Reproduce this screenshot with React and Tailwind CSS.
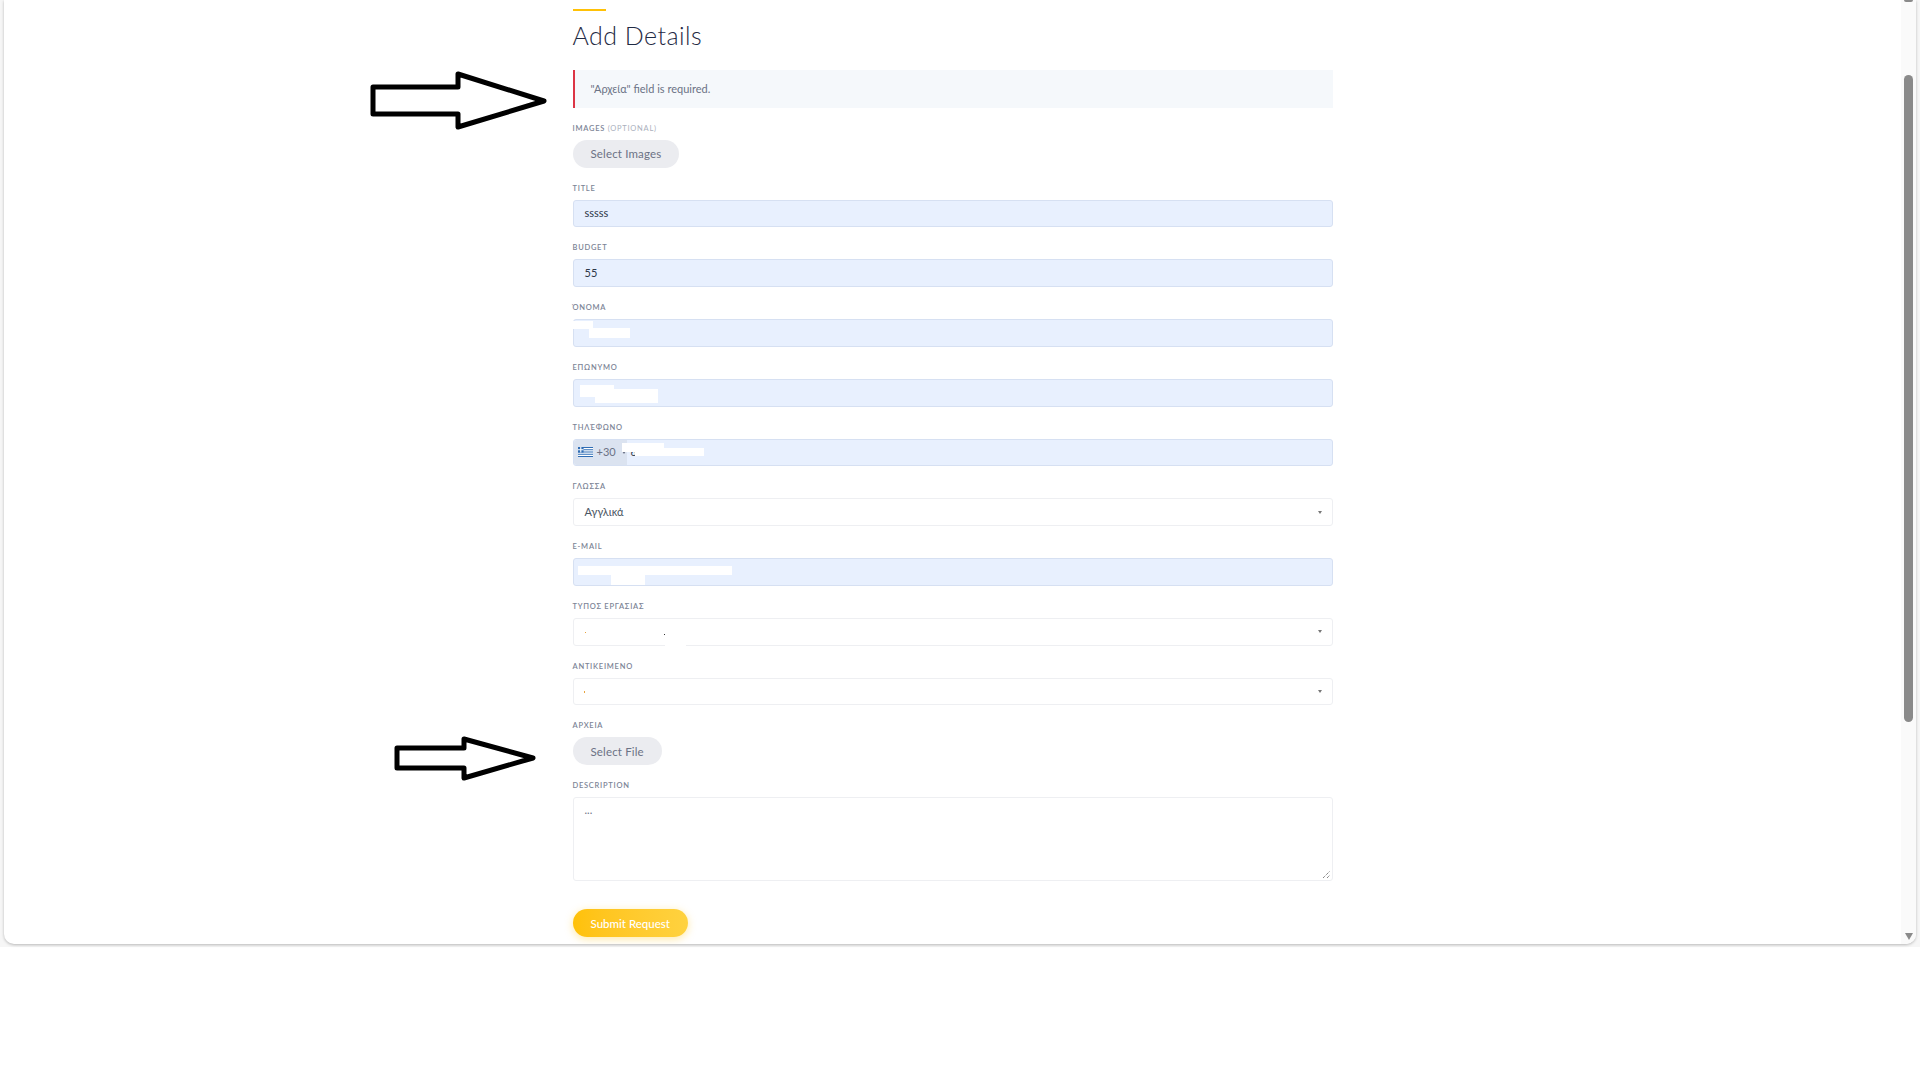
const font = "font-['Lato','Noto_Sans',sans-serif]";

function Label({ children, extra }) {
  return (
    <div className="h-[12px] mb-[6px] text-[7.5px] leading-[14px] tracking-[0.75px] font-semibold text-[#7c8496]">
      {children}
      {extra && <span className="text-[#aab0bd] font-normal"> {extra}</span>}
    </div>
  );
}

function Field({ label, extra, children }) {
  return (
    <div className="mb-[14px]">
      <Label extra={extra}>{label}</Label>
      {children}
    </div>
  );
}

function FilledInput({ value, children }) {
  return (
    <div className="relative h-[27.75px] rounded-[3px] border border-[#d6e0f2] bg-[#e8f0fe] flex items-center pl-[11px] text-[11px] text-[#2d3748] overflow-visible">
      {value}
      {children}
    </div>
  );
}

function SelectBox({ value, children }) {
  return (
    <div className="relative h-[27.75px] rounded-[3px] border border-[#eeeff2] bg-white flex items-center justify-between pl-[11px] pr-[10px] text-[11px] text-[#4b5563]">
      <span>{value}</span>
      <span className="w-0 h-0 border-x-[2.5px] border-x-transparent border-t-[3px] border-t-[#777]" />
      {children}
    </div>
  );
}

function GrayButton({ children }) {
  return (
    <button className="h-[28px] px-[18px] rounded-full bg-[#ebecf0] text-[11.5px] tracking-[0.15px] text-[#6b7285]">
      {children}
    </button>
  );
}

// painted-over bits of the screenshot
function Patch({ className }) {
  return <div className={`absolute bg-white ${className}`} />;
}

function GreekFlag() {
  return (
    <svg width="15" height="10" viewBox="0 0 27 18" className="shrink-0">
      <rect width="27" height="18" fill="#fff" />
      <path d="M0 1h27M0 5h27M0 9h27M0 13h27M0 17h27" stroke="#2f6db5" strokeWidth="2" />
      <rect width="10" height="10" fill="#2f6db5" />
      <path d="M5 0v10M0 5h10" stroke="#fff" strokeWidth="2" />
    </svg>
  );
}

function Arrow({ className, width, height, points }) {
  return (
    <svg className={`absolute ${className}`} width={width} height={height}>
      <polygon points={points} fill="#fff" stroke="#000" strokeWidth="5" strokeLinejoin="round" />
    </svg>
  );
}

export default function App() {
  return (
    <div className={`relative h-[1065px] bg-white overflow-hidden ${font}`}>
      <div className="w-[1920px] h-[947px] bg-[#f6f6f6]">
        <div className="ml-[4px] w-[1912px] h-[944px] bg-white rounded-b-[10px] shadow-[0_1px_3px_rgba(0,0,0,0.25)] flex overflow-hidden">
          <div className="flex-1">
            <div className="mx-auto w-[760px] pt-[9px]">
              <div className="w-[33px] h-[2px] bg-[#ffc107]" />
              <h2 className="mt-[9px] h-[30px] text-[25px] leading-[30px] font-light text-[#1f2a44] tracking-[0.45px]">Add Details</h2>
              <div className="mt-[20px] mb-[13.5px] h-[38px] bg-[#f5f8fb] border-l-2 border-[#dc3545] flex items-center pl-[16px] text-[11px] text-[#6b7285]">
                "Αρχεία" field is required.
              </div>

              <Field label="IMAGES" extra="(OPTIONAL)">
                <GrayButton>Select Images</GrayButton>
              </Field>
              <Field label="TITLE"><FilledInput value="sssss" /></Field>
              <Field label="BUDGET"><FilledInput value="55" /></Field>
              <Field label="ΌΝΟΜΑ">
                <FilledInput>
                  <Patch className="-left-px top-px w-[20px] h-[8px]" />
                  <Patch className="left-[15px] top-[8px] w-[41px] h-[10px]" />
                </FilledInput>
              </Field>
              <Field label="ΕΠΩΝΥΜΟ">
                <FilledInput>
                  <Patch className="left-[6px] top-[5px] w-[34px] h-[12px]" />
                  <Patch className="left-[21px] top-[9px] w-[63px] h-[14px]" />
                </FilledInput>
              </Field>
              <Field label="ΤΗΛΈΦΩΝΟ">
                <div className="relative h-[27.75px] rounded-[3px] border border-[#d6e0f2] bg-[#e8f0fe] flex items-center text-[11px]">
                  <div className="h-full w-[53px] bg-[#dbe3f0] rounded-l-[3px] flex items-center pl-[4px] gap-[4px] text-[#6b7285]">
                    <GreekFlag />
                    <span>+30</span>
                    <span className="ml-[2px] w-0 h-0 border-x-[2px] border-x-transparent border-t-[3px] border-t-[#6b7285]" />
                  </div>
                  <span className="ml-[4px] text-[#2d3748]">6</span>
                  <Patch className="left-[48px] top-[3px] w-[42px] h-[9px]" />
                  <Patch className="left-[61px] top-[8px] w-[69px] h-[8px]" />
                </div>
              </Field>
              <Field label="ΓΛΩΣΣΑ"><SelectBox value="Αγγλικά" /></Field>
              <Field label="E-MAIL">
                <FilledInput>
                  <Patch className="left-[4px] top-[7px] w-[154px] h-[9px]" />
                  <Patch className="left-[37px] top-[13px] w-[34px] h-[13px]" />
                </FilledInput>
              </Field>
              <Field label="ΤΥΠΟΣ ΕΡΓΑΣΙΑΣ">
                <SelectBox>
                  <div className="absolute left-[11px] top-[13px] w-px h-px bg-[#e8a33d]" />
                  <div className="absolute left-[90px] top-[15px] w-px h-px bg-[#333]" />
                  <Patch className="left-[91px] -bottom-px w-[21px] h-[3px]" />
                </SelectBox>
              </Field>
              <Field label="ΑΝΤΙΚΕΙΜΕΝΟ">
                <SelectBox>
                  <div className="absolute left-[10px] top-[12px] w-px h-[2px] bg-[#e8a33d]" />
                </SelectBox>
              </Field>
              <Field label="ΑΡΧΕΙΑ">
                <GrayButton>Select File</GrayButton>
              </Field>
              <Field label="DESCRIPTION">
                <div className="relative h-[84px] rounded-[3px] border border-[#eeeff2] bg-white pl-[11px] pt-[4px] text-[11px] text-[#6b7285]">
                  ...
                  <svg className="absolute right-[1px] bottom-[1px]" width="9" height="9" stroke="#555" strokeDasharray="1 1">
                    <path d="M1 8 8 1M5 8 8 5" />
                  </svg>
                </div>
              </Field>
              <button className="mt-[14px] h-[28px] px-[18px] rounded-full bg-gradient-to-r from-[#ffc107] to-[#ffd23f] text-[11.5px] font-medium text-white shadow-[0_2px_8px_rgba(255,193,7,0.35)]">
                Submit Request
              </button>
            </div>
          </div>
          {/* scrollbar */}
          <div className="w-[15px] bg-[#fafafa] flex flex-col items-center">
            <div className="w-[9px] h-[2px] bg-[#8a8a8a] rounded-b-[3px]" />
            <div className="mt-[73px] w-[9px] h-[647px] bg-[#8a8a8a] rounded-full" />
            <div className="mt-auto mb-[4px] w-0 h-0 border-x-[4.5px] border-x-transparent border-t-[7px] border-t-[#8a8a8a]" />
          </div>
        </div>
      </div>

      <Arrow className="left-[369px] top-[70px]" width="180" height="62" points="4,17 89,17 89,4 175,31 89,57 89,44 4,44" />
      <Arrow className="left-[393px] top-[735px]" width="144" height="48" points="4,13 71,13 71,4 140,23 71,43 71,33 4,33" />
    </div>
  );
}
